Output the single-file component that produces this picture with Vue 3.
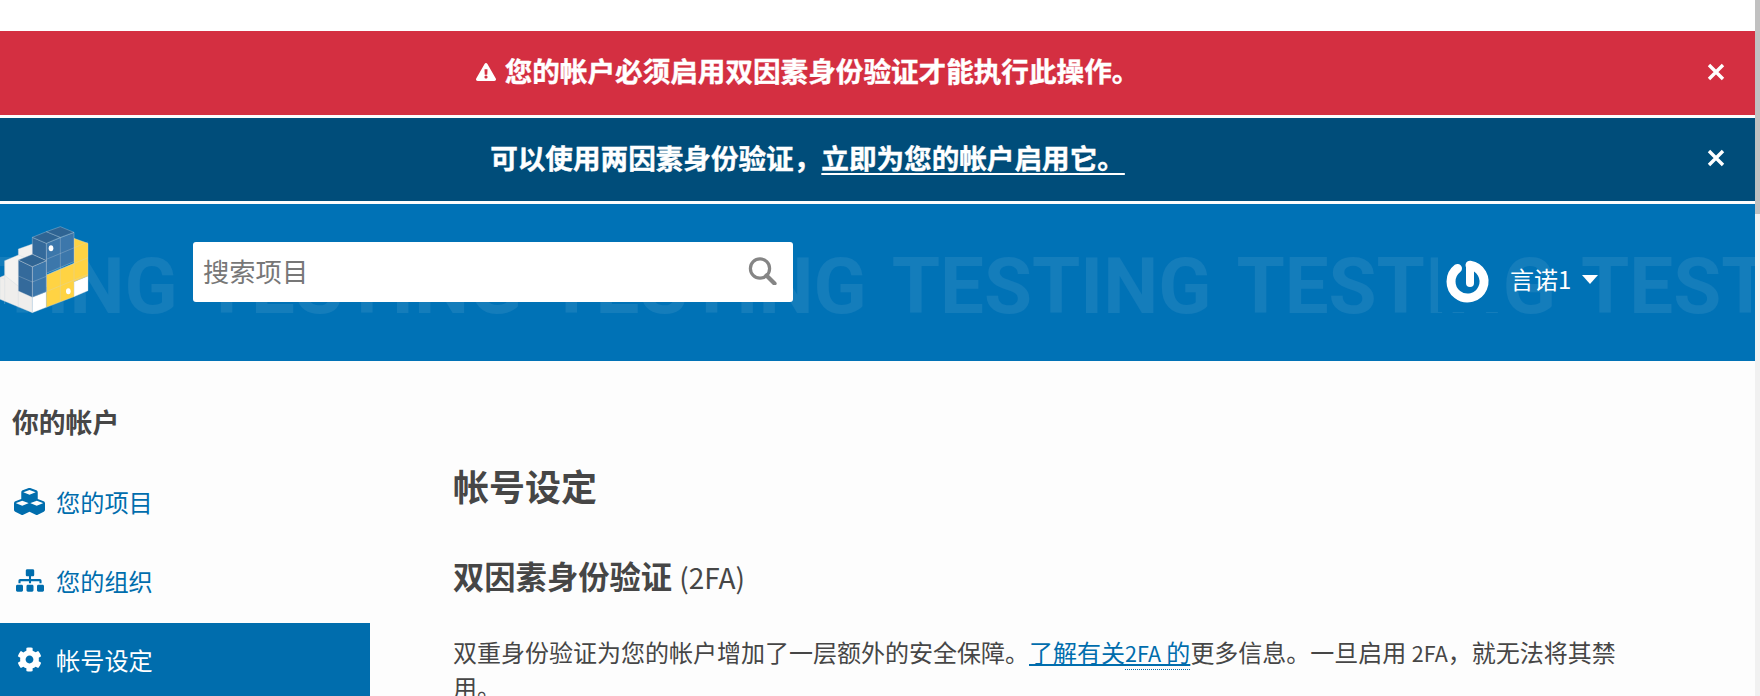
<script setup>
const navItems = [
  { label: '您的项目', icon: 'cubes' },
  { label: '您的组织', icon: 'sitemap' },
  { label: '帐号设定', icon: 'cog', active: true }
]
const marks = ['TESTING', 'TESTING', 'TESTING', 'TESTING', 'TESTING', 'TESTING']
</script>

<template>
  <div class="page">
    <div class="content">
      <div class="banner banner-danger">
        <span class="banner-text">
          <svg class="warn" viewBox="0 0 576 512"><path fill="currentColor" d="M569.517 440.013C587.975 472.007 564.806 512 527.94 512H48.054c-36.937 0-59.999-40.055-41.577-71.987L246.423 23.985c18.467-32.009 64.72-31.951 83.154 0l239.94 416.028zM288 354c-25.405 0-46 20.595-46 46s20.595 46 46 46 46-20.595 46-46-20.595-46-46-46zm-43.673-165.346l7.418 136c.347 6.364 5.609 11.346 11.982 11.346h48.546c6.373 0 11.635-4.982 11.982-11.346l7.418-136c.375-6.874-5.098-12.654-11.982-12.654h-63.383c-6.884 0-12.356 5.78-11.981 12.654z"/></svg>
          您的帐户必须启用双因素身份验证才能执行此操作。
        </span>
        <svg class="close" viewBox="0 0 18 18"><path d="M2 2l14 14M16 2L2 16" stroke="currentColor" stroke-width="3.4" fill="none"/></svg>
      </div>
      <div class="banner banner-info">
        <span class="banner-text">可以使用两因素身份验证，<a class="banner-link">立即为您的帐户启用它。</a></span>
        <svg class="close" viewBox="0 0 18 18"><path d="M2 2l14 14M16 2L2 16" stroke="currentColor" stroke-width="3.4" fill="none"/></svg>
      </div>

      <header class="site-header">
        <div class="watermark">
          <span v-for="(m, i) in marks" :key="i">{{ m }}</span>
        </div>
        <svg class="logo" viewBox="0 0 270 300">
          <g stroke="#c9d3dc" stroke-width="1.5" stroke-opacity="0.7">
            <polygon fill="#f2f1ef" points="55,87 97,72 139,90 139,200 97,232 55,215" />
            <polygon fill="#f4f3f1" points="14,122 55,105 97,122 97,232 14,197" />
            <polygon fill="#efeeec" points="0,172 14,166 97,232 97,278 0,238" />
            <polygon fill="#ffffff" points="97,232 139,215 139,262 97,278" />
            <polygon fill="#ffffff" points="222,185 264,168 264,212 222,230" />
            <polygon fill="#ffd343" points="222,55 264,70 264,168 222,185 222,230 139,262 139,165 222,130" />
            <polygon fill="#3c77ab" points="139,70 222,37 222,125 139,160" />
            <polygon fill="#3c77ab" points="97,140 139,122 139,215 97,232" />
            <polygon fill="#346a9b" points="97,52 139,70 139,122 97,103" />
            <polygon fill="#346a9b" points="55,120 97,140 97,232 55,213" />
            <polygon fill="#2f6493" points="97,52 139,35 181,52 139,70" />
            <polygon fill="#2f6493" points="139,35 181,20 222,37 181,52" />
            <polygon fill="#2f6493" points="55,120 97,103 139,122 97,140" />
          </g>
          <path d="M181 52v96M55 168l42 18M97 186l42-17M139 118l125-52M139 165l125-52M139 215l125-52M181 148v97M222 130v55M14 122v75M0 172l14 6M55 213v50M14 197v55" stroke="#c9d3dc" stroke-width="1.5" stroke-opacity="0.6" fill="none" />
          <ellipse cx="153" cy="85" rx="7" ry="9" fill="#fff" />
          <ellipse cx="205" cy="214" rx="7" ry="9" fill="#fff" />
        </svg>
        <div class="search">
          <span class="search-placeholder">搜索项目</span>
          <svg class="search-icon" viewBox="0 0 29 28">
            <circle cx="12" cy="11.5" r="9.6" fill="none" stroke="currentColor" stroke-width="3.2" />
            <path d="M18.5 18.5l8 8" stroke="currentColor" stroke-width="4.2" stroke-linecap="round" fill="none" />
          </svg>
        </div>
        <div class="user">
          <div class="avatar">
            <svg class="ring" viewBox="0 0 60 60" width="60" height="60">
              <path d="M32 13.5V31" stroke="#fff" stroke-width="8" stroke-linecap="round" fill="none" />
              <path d="M32 13.2A16.5 16.5 0 1 1 19.5 16.4" stroke="#fff" stroke-width="9" stroke-linecap="round" fill="none" />
            </svg>
          </div>
          <span class="user-name">言诺1</span>
          <span class="caret"></span>
        </div>
      </header>

      <div class="layout">
        <aside class="sidebar">
          <h3 class="side-title">你的帐户</h3>
          <a v-for="item in navItems" :key="item.label" class="nav-item" :class="{ active: item.active }">
            <span class="nav-icon-box">
              <svg v-if="item.icon === 'cubes'" class="icon-cubes" viewBox="0 0 512 512"><path fill="currentColor" d="M488.6 250.2L392 214V105.5c0-15-9.3-28.4-23.4-33.7l-100-37.5c-8.1-3.1-17.1-3.1-25.3 0l-100 37.5c-14.1 5.3-23.4 18.7-23.4 33.7V214l-96.6 36.2C9.3 255.5 0 268.9 0 283.9V394c0 13.6 7.7 26.1 19.9 32.2l100 50c10.1 5.1 22.1 5.1 32.2 0l103.9-52 103.9 52c10.1 5.1 22.1 5.1 32.2 0l100-50c12.2-6.1 19.9-18.6 19.9-32.2V283.9c0-15-9.3-28.4-23.4-33.7zM154 104.1l102-38.2 102 38.2v.6l-102 41.4-102-41.4v-.6zM238 283.2l-102 41.4-102-41.4v-.6l102-38.2 102 38.2v.6zM478 283.2l-102 41.4-102-41.4v-.6l102-38.2 102 38.2v.6z"/></svg>
              <svg v-else-if="item.icon === 'sitemap'" class="icon-sitemap" viewBox="0 0 640 512"><path fill="currentColor" d="M128 352H32c-17.67 0-32 14.33-32 32v96c0 17.67 14.33 32 32 32h96c17.67 0 32-14.33 32-32v-96c0-17.67-14.33-32-32-32zm-24-80h192v48h48v-48h192v48h48v-57.59c0-21.17-17.23-38.41-38.41-38.41H344v-64h40c17.67 0 32-14.33 32-32V32c0-17.67-14.33-32-32-32H256c-17.67 0-32 14.33-32 32v96c0 17.67 14.33 32 32 32h40v64H94.41C73.23 224 56 241.23 56 262.41V320h48v-48zm264 80h-96c-17.67 0-32 14.33-32 32v96c0 17.67 14.33 32 32 32h96c17.67 0 32-14.33 32-32v-96c0-17.67-14.33-32-32-32zm240 0h-96c-17.67 0-32 14.33-32 32v96c0 17.67 14.33 32 32 32h96c17.67 0 32-14.33 32-32v-96c0-17.67-14.33-32-32-32z"/></svg>
              <svg v-else class="icon-cog" viewBox="0 0 512 512"><path fill="currentColor" d="M487.4 315.7l-42.6-24.6c4.3-23.2 4.3-47 0-70.2l42.6-24.6c4.9-2.8 7.1-8.6 5.5-14-11.1-35.6-30-67.8-54.7-94.6-3.8-4.1-10-5.1-14.8-2.3L380.8 110c-17.9-15.4-38.5-27.3-60.8-35.1V25.8c0-5.6-3.9-10.5-9.4-11.7-36.7-8.2-74.3-7.8-109.2 0-5.5 1.2-9.4 6.1-9.4 11.7V75c-22.2 7.9-42.8 19.8-60.8 35.1L88.7 85.5c-4.9-2.8-11-1.9-14.8 2.3-24.7 26.7-43.6 58.9-54.7 94.6-1.7 5.4.6 11.2 5.5 14L67.3 221c-4.3 23.2-4.3 47 0 70.2l-42.6 24.6c-4.9 2.8-7.1 8.6-5.5 14 11.1 35.6 30 67.8 54.7 94.6 3.8 4.1 10 5.1 14.8 2.3l42.6-24.6c17.9 15.4 38.5 27.3 60.8 35.1v49.2c0 5.6 3.9 10.5 9.4 11.7 36.7 8.2 74.3 7.8 109.2 0 5.5-1.2 9.4-6.1 9.4-11.7v-49.2c22.2-7.9 42.8-19.8 60.8-35.1l42.6 24.6c4.9 2.8 11 1.9 14.8-2.3 24.7-26.7 43.6-58.9 54.7-94.6 1.5-5.5-.7-11.3-5.6-14.1zM256 336c-44.1 0-80-35.9-80-80s35.9-80 80-80 80 35.9 80 80-35.9 80-80 80z"/></svg>
            </span>
            <span>{{ item.label }}</span>
          </a>
        </aside>
        <main class="main">
          <h1 class="page-title">帐号设定</h1>
          <h2 class="section-title">双因素身份验证 <span class="abbr">(2FA)</span></h2>
          <p class="para">双重身份验证为您的帐户增加了一层额外的安全保障。<a class="para-link">了解有关<span class="dotted"><span class="latin">2FA</span> 的</span></a>更多信息。一旦启用 <span class="latin">2FA</span>，就无法将其禁用。</p>
        </main>
      </div>
    </div>
    <div class="scrollbar"><div class="scroll-thumb"></div></div>
  </div>
</template>

<style>
html, body {
  margin: 0;
  overflow: hidden;
}
</style>

<style scoped>
.page {
  display: flex;
  width: 1760px;
  height: 696px;
  overflow: hidden;
  background: #fdfdfd;
  font-family: "Noto Sans CJK SC", "Noto Sans", sans-serif;
  color: #464646;
}
.content {
  flex: 1;
  min-width: 0;
  padding-top: 31px;
  background: linear-gradient(#fff 31px, #fdfdfd 31px);
}
.scrollbar {
  width: 5px;
  background: #f1f1f1;
}
.scroll-thumb {
  height: 214px;
  background: #c1c1c1;
}
.banner {
  display: flex;
  align-items: center;
  justify-content: center;
  position: relative;
  box-sizing: border-box;
  height: 84px;
  margin-bottom: 3px;
  padding: 0 140px 6px 0;
  color: #fff;
  font-size: 27.6px;
  font-weight: 700;
  -webkit-text-stroke: 0.4px #fff;
}
.banner-danger {
  background: #d42f41;
}
.banner-info {
  height: 83px;
  background: #004d7a;
}
.banner-text {
  display: flex;
  align-items: center;
}
.warn {
  width: 20px;
  height: 18px;
  margin-right: 9px;
  margin-top: 4px;
}
.banner-link {
  text-decoration: underline;
  text-underline-offset: 4px;
}
.close {
  position: absolute;
  right: 30px;
  top: 32px;
  width: 18px;
  height: 18px;
}
.banner-info .close {
  top: 31px;
}
.site-header {
  display: flex;
  align-items: flex-start;
  position: relative;
  height: 157px;
  overflow: hidden;
  background: #0072b6;
}
.watermark {
  position: absolute;
  left: -142px;
  top: 38px;
  display: flex;
  gap: 25px;
  white-space: nowrap;
  font-family: Roboto, sans-serif;
  font-size: 78px;
  font-weight: 700;
  line-height: 90px;
  color: rgba(255, 255, 255, 0.08);
}
.logo {
  position: relative;
  flex: none;
  width: 90px;
  height: 100px;
  margin-top: 16px;
}
.search {
  position: relative;
  flex: none;
  display: flex;
  align-items: center;
  justify-content: space-between;
  width: 600px;
  height: 60px;
  margin-top: 38px;
  margin-left: 103px;
  padding: 0 16px 4px 10px;
  box-sizing: border-box;
  border-radius: 3px;
  background: #fff;
  color: #777;
  font-size: 26.3px;
}
.search-icon {
  width: 29px;
  height: 28px;
  margin-top: 2px;
  color: #858585;
}
.user {
  position: relative;
  display: flex;
  align-items: center;
  margin-left: 645px;
  margin-top: 48px;
  color: #fff;
  font-size: 24px;
}
.avatar {
  width: 60px;
  height: 60px;
  background: #0072b6;
}
.ring {
  filter: blur(0.7px);
}
.user-name {
  margin-left: 12px;
  margin-top: -8px;
}
.caret {
  width: 0;
  height: 0;
  margin-left: 11px;
  margin-top: -6px;
  border-left: 8px solid transparent;
  border-right: 8px solid transparent;
  border-top: 9px solid #fff;
}
.layout {
  display: flex;
}
.sidebar {
  flex: none;
  width: 370px;
  padding-top: 42px;
}
.side-title {
  margin: 0 0 24px;
  padding-left: 12px;
  font-size: 26.8px;
  line-height: 38px;
  font-weight: 700;
}
.nav-item {
  display: flex;
  align-items: center;
  box-sizing: border-box;
  height: 79px;
  padding: 0 0 6px 14px;
  color: #006dad;
  font-size: 24.2px;
}
.nav-item.active {
  background: #006dad;
  color: #fff;
}
.nav-icon-box {
  flex: none;
  display: flex;
  justify-content: center;
  width: 31px;
  margin-right: 11px;
}
.icon-cubes {
  width: 31px;
  height: 31px;
}
.icon-sitemap {
  width: 28px;
  height: 23px;
}
.icon-cog {
  width: 25px;
  height: 25px;
}
.main {
  flex: none;
  width: 1176px;
  margin-left: 83px;
  padding-top: 98px;
}
.page-title {
  margin: 0;
  font-size: 36px;
  line-height: 52px;
  font-weight: 700;
}
.section-title {
  margin: 43px 0 0;
  font-size: 31.3px;
  line-height: 44px;
  font-weight: 700;
}
.abbr {
  font-weight: 400;
  font-size: 28px;
}
.para {
  margin: 36px 0 0;
  font-size: 24px;
  line-height: 34px;
}
.latin {
  font-size: 21.5px;
}
.para-link {
  color: #006dad;
  text-decoration: underline;
}
.dotted {
  border-bottom: 1px dotted #006dad;
}
</style>
